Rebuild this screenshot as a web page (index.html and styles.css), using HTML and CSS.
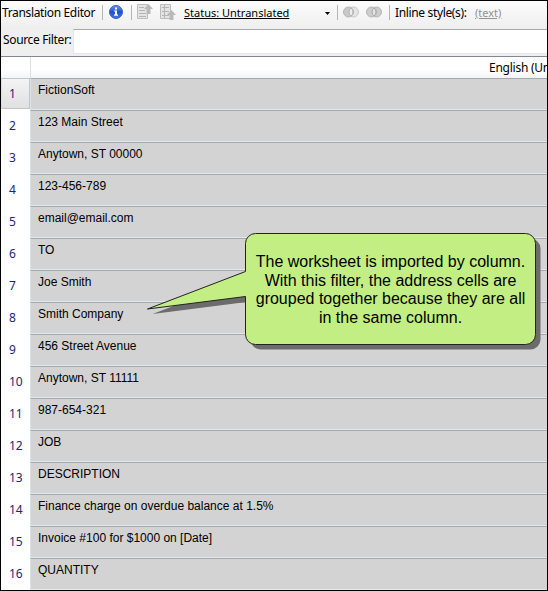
FILE: index.html
```html
<!DOCTYPE html>
<html lang="en">
<head>
<meta charset="utf-8">
<title>Translation Editor</title>
<link rel="stylesheet" href="styles.css">
</head>
<body>
<div class="window">
  <div class="toolbar">
    <span class="title">Translation Editor</span>
    <i class="sep sep-a"></i>
    <svg class="info" width="14" height="14" viewBox="0 0 14 14">
      <defs><linearGradient id="blue" x2="0" y2="1"><stop stop-color="#6f9cee"/><stop offset=".5" stop-color="#1f50cc"/><stop offset="1" stop-color="#4876e2"/></linearGradient></defs>
      <circle cx="7" cy="7" r="6.5" fill="url(#blue)" stroke="#3860bd"/>
      <path d="M6 2.5h2v2H6zM5 5.5h3v4h1v1.3H5V9.5h1v-3H5z" fill="#fff"/>
    </svg>
    <i class="sep sep-b"></i>
    <svg class="move-up" width="16" height="16" viewBox="0 0 16 16">
      <path d="M.5.5h10v14H.5z" fill="#e4e4e4" stroke="#bdbdbd"/>
      <path d="M2 3.5h5M2 6.5h6M2 9.5h7M2 12.5h7" stroke="#b5b5b5"/>
      <path d="M11.5 0l4.5 5h-2.5v5h-4V5H7z" fill="#b9b9b9"/>
    </svg>
    <svg class="move-down" width="16" height="16" viewBox="0 0 16 16">
      <path d="M.5.5h10v14H.5z" fill="#e4e4e4" stroke="#bdbdbd"/>
      <path d="M2 3.5h2m1 0h4M2 7.500h2m1 0h4M2 11.500h2m1 0h4M4.500 1v13" stroke="#b5b5b5"/>
      <path d="M11.500 6l4.500 5h-2.500v5h-4v-5H7z" fill="#b9b9b9"/>
    </svg>
    <span class="status">Status: Untranslated</span>
    <svg class="caret" width="5" height="3" viewBox="0 0 5 3"><path d="M0 0h5L2.500 3z"/></svg>
    <i class="sep sep-c"></i>
    <svg class="rings" width="16" height="12" viewBox="0 0 16 12">
      <circle cx="10.500" cy="6" r="5" fill="#e5e5e5" stroke="#c8c8c8"/>
      <circle cx="5.500" cy="6" r="5" fill="#c9c9c9" stroke="#b4b4b4"/>
      <path d="M8 2a5 5 0 0 1 0 8a5 5 0 0 1 0-8z" fill="#eee" stroke="#b4b4b4"/>
    </svg>
    <svg class="rings rings-both" width="16" height="12" viewBox="0 0 16 12">
      <circle cx="10.500" cy="6" r="5" fill="#cdcdcd" stroke="#b4b4b4"/>
      <circle cx="5.500" cy="6" r="5" fill="#cdcdcd" stroke="#b4b4b4"/>
      <path d="M8 2a5 5 0 0 1 0 8a5 5 0 0 1 0-8z" fill="#e4e4e4" stroke="#aaa"/>
    </svg>
    <i class="sep sep-d"></i>
    <span class="inline-label">Inline style(s):</span>
    <span class="inline-value">(text)</span>
  </div>
  <div class="filter"><label class="filter-label" for="source">Source Filter:</label><input id="source" class="filter-input"></div>
  <div class="head"><div class="corner"></div><div class="lang">English (United States)</div></div>
  <div class="grid">
    <div class="row"><div class="num current">1</div><div class="cell">FictionSoft</div></div>
    <div class="row"><div class="num">2</div><div class="cell">123 Main Street</div></div>
    <div class="row"><div class="num">3</div><div class="cell">Anytown, ST 00000</div></div>
    <div class="row"><div class="num">4</div><div class="cell">123-456-789</div></div>
    <div class="row"><div class="num">5</div><div class="cell">email@email.com</div></div>
    <div class="row"><div class="num">6</div><div class="cell">TO</div></div>
    <div class="row"><div class="num">7</div><div class="cell">Joe Smith</div></div>
    <div class="row"><div class="num">8</div><div class="cell">Smith Company</div></div>
    <div class="row"><div class="num">9</div><div class="cell">456 Street Avenue</div></div>
    <div class="row"><div class="num">10</div><div class="cell">Anytown, ST 11111</div></div>
    <div class="row"><div class="num">11</div><div class="cell">987-654-321</div></div>
    <div class="row"><div class="num">12</div><div class="cell">JOB</div></div>
    <div class="row"><div class="num">13</div><div class="cell">DESCRIPTION</div></div>
    <div class="row"><div class="num">14</div><div class="cell">Finance charge on overdue balance at 1.5%</div></div>
    <div class="row"><div class="num">15</div><div class="cell">Invoice #100 for $1000 on [Date]</div></div>
    <div class="row"><div class="num">16</div><div class="cell">QUANTITY</div></div>
  </div>
  <div class="callout">
    <svg class="bubble" width="396" height="120" viewBox="0 0 396 120">
      <path d="M107.500 3.500H378.500a10 10 0 0 1 10 10V104.500a10 10 0 0 1-10 10H108.500a10 10 0 0 1-10-10V66.500L.5 79 98.500 41.500V13.500a10 10 0 0 1 10-10z" transform="translate(5 5)" fill="#6c6c6c"/>
      <path d="M108.500 3.500H378.500a10 10 0 0 1 10 10V104.500a10 10 0 0 1-10 10H108.500a10 10 0 0 1-10-10V66.500L.5 79 98.500 41.500V13.500a10 10 0 0 1 10-10z" fill="#c2ee84" stroke="#222"/>
    </svg>
    <p class="note">The worksheet is imported by column.<br>With this filter, the address cells are<br>grouped together because they are all<br>in the same column.</p>
  </div>
</div>
</body>
</html>
```
FILE: styles.css
```css
* { box-sizing: border-box; }
body { margin: 0; }
.window {
  position: relative;
  width: 548px;
  height: 591px;
  border: 1px solid #000;
  overflow: hidden;
  background: #fff;
  font: 12px/16px "Noto Sans", sans-serif;
  color: #000;
}
.toolbar {
  display: flex;
  align-items: flex-start;
  height: 28px;
  padding: 3px 0 0 1px;
  background: linear-gradient(#fcfcfc, #eee);
  white-space: nowrap;
}
.toolbar > * { flex: none; }
.title { width: 100px; margin-top: 1px; letter-spacing: -.35px; }
.sep { width: 1px; height: 15px; margin-top: 1px; background: #b5b5b5; }
.info { margin: 1px 0 0 6px; }
.sep-b { margin-left: 8px; }
.move-up { margin-left: 5px; }
.move-down { margin-left: 7px; }
.status { width: 105px; margin: 1px 0 0 8px; font: 11px/15px "Noto Sans", sans-serif; text-decoration: underline; }
.caret { margin: 8px 0 0 36px; }
.sep-c { margin-left: 7px; }
.rings { margin: 2px 0 0 5px; }
.rings-both { margin-left: 7px; }
.sep-d { margin-left: 7px; }
.inline-label { width: 76px; margin: 1px 0 0 5px; letter-spacing: -.35px; }
.inline-value { margin: 1px 0 0 4px; font: 11px/15px "Noto Sans", sans-serif; color: #929292; text-decoration: underline; }
.filter { display: flex; height: 28px; padding-left: 2px; background: #efefef; border-bottom: 1px solid #858790; }
.filter-label { width: 70px; padding-top: 3px; letter-spacing: -.35px; white-space: nowrap; }
.filter-input { flex: 1; height: 25px; padding: 0 4px; border: 1px solid #e5e7ed; border-top-color: #aaa; border-right: 0; background: #fff; border-radius: 0; }
.head { display: flex; height: 21px; background: linear-gradient(#fff 60%, #f3f4f6); white-space: nowrap; }
.corner { flex: none; width: 30px; border-right: 1px solid #dcdfe3; }
.lang { flex: 1; min-width: 0; overflow: hidden; padding: 3px 0 0 458px; letter-spacing: -.25px; }
.grid { display: grid; grid-auto-rows: 32px; }
.row { display: flex; }
.num { width: 29px; padding: 8px 0 0 8px; color: #1d2675; }
.current { height: 31px; border: 1px solid #c4c4c6; border-left-color: #ddd; padding: 7px 0 0 7px; background: linear-gradient(#f4f4f4, #e0e0e0); }
.cell {
  flex: 1;
  padding: 4px 0 0 7px;
  border-top: 1px solid #a5a9b1;
  border-bottom: 1px solid #e4e7ea;
  border-left: 1px solid #dce2e7;
  background: #d3d3d3;
  font: 12px/14px "Liberation Sans", sans-serif;
}
.callout { position: absolute; left: 146px; top: 229px; width: 396px; height: 120px; }
.bubble { display: block; }
.note { position: absolute; left: 99px; top: 23px; width: 289px; margin: 0; font: 16px/18.5px "Liberation Sans", sans-serif; text-align: center; white-space: nowrap; }
```
